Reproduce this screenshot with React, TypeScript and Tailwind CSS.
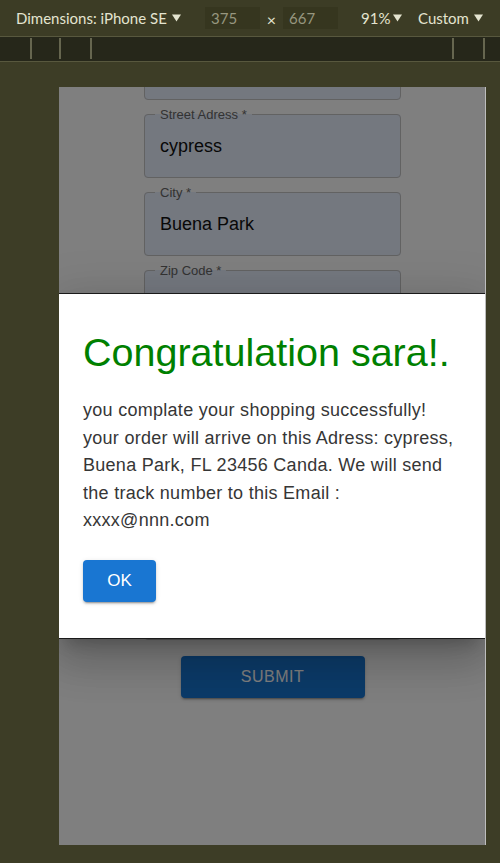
import React from "react";

const Tri = () => (
  <svg width="9" height="8" viewBox="0 0 9 8" className="inline-block">
    <path d="M0 0.5 L9 0.5 L4.5 7.5 Z" fill="#e4e4d0" />
  </svg>
);

const fields = [
  { label: "", value: "", last: false },
  { label: "Street Adress *", value: "cypress", last: false },
  { label: "City *", value: "Buena Park", last: false },
  { label: "Zip Code *", value: "", last: false },
  { label: "", value: "", last: false },
  { label: "", value: "", last: false },
  { label: "", value: "", last: false },
  { label: "", value: "", last: true },
];

export default function App() {
  return (
    <div className="w-[500px] h-[863px] overflow-hidden bg-[#3d3d26] flex flex-col" style={{ fontFamily: "'Liberation Sans', Arial, sans-serif" }}>
      {/* top bar */}
      <div className="h-[37px] shrink-0 flex items-center pl-[16px] border-b border-[#58583e] text-[#e4e4d0] text-[15px] leading-[20px] bg-[#3c3c25]" style={{ fontFamily: "Lato, 'Noto Sans', sans-serif" }}>
        <div className="w-[189px] flex items-center gap-[5px]">
          <span>Dimensions: iPhone SE</span>
          <Tri />
        </div>
        <div className="w-[55px] h-[22px] bg-[#36361f] pl-[6px] flex items-center text-[#97977f]">375</div>
        <div className="w-[23px] flex items-center justify-center text-[#e4e4d0] text-[16px] pt-[3px]">×</div>
        <div className="w-[55px] h-[22px] bg-[#36361f] pl-[6px] flex items-center text-[#97977f]">667</div>
        <div className="ml-[23px] w-[57px] flex items-center gap-[3px]">
          <span>91%</span>
          <Tri />
        </div>
        <div className="flex items-center gap-[5px]">
          <span>Custom</span>
          <Tri />
        </div>
      </div>
      {/* ruler */}
      <div className="h-[25px] shrink-0 bg-[#26271a] border-b border-[#58583e] flex items-start pt-[1px]">
        <div className="ml-[30px] w-[2px] h-[21px] bg-[#66664f]" />
        <div className="ml-[27px] w-[2px] h-[21px] bg-[#66664f]" />
        <div className="ml-[29px] w-[2px] h-[21px] bg-[#66664f]" />
        <div className="ml-[360px] w-[2px] h-[21px] bg-[#66664f]" />
        <div className="ml-[29px] w-[2px] h-[21px] bg-[#66664f]" />
      </div>
      {/* stage */}
      <div className="flex-1 pt-[25px] pl-[59px]">
        <div className="relative w-[427px] h-[758px] bg-white overflow-hidden border-r border-[#bdbdbd]">
          <div className="flex flex-col items-center -mt-[57.5px]">
            <div className="flex flex-col gap-[8px] w-[257px] ml-[1px]">
              {fields.map((f, i) => (
                <fieldset key={i} className={(f.last ? "h-[64.5px] " : "h-[70px] ") + "rounded-[4px] border border-[#c4c4c4] bg-[#e8f0fe] p-0 m-0 min-w-0"}>
                  {f.label ? (
                    <legend className="ml-[10px] px-[5px] text-[13px] leading-[13px] text-[#666666]">{f.label}</legend>
                  ) : null}
                  {f.value ? (
                    <div className="pl-[15px] pt-[16px] text-[18px] leading-[18px] text-[#111111]">{f.value}</div>
                  ) : null}
                </fieldset>
              ))}
            </div>
            <button className="mt-[16px] ml-[1px] w-[184px] h-[42px] rounded-[4px] bg-[#1976d2] text-white text-[16px] tracking-[0.5px] uppercase shadow-[0_3px_1px_-2px_rgba(0,0,0,0.2),0_2px_2px_0_rgba(0,0,0,0.14),0_1px_5px_0_rgba(0,0,0,0.12)]">
              Submit
            </button>
          </div>

          {/* overlay */}
          <div className="absolute inset-0 bg-black/50" />

          {/* dialog */}
          <div className="absolute left-0 right-0 top-[206px] h-[346px] bg-white border-y border-[#1a1a1a] px-[24px] pt-[35px] shadow-[0_11px_15px_-7px_rgba(0,0,0,0.2),0_24px_38px_3px_rgba(0,0,0,0.14),0_9px_46px_8px_rgba(0,0,0,0.12)]">
            <h1 className="text-[39.5px] leading-[47.4px] text-[#008000] font-normal">Congratulation sara!.</h1>
            <p className="mt-[21px] text-[18px] leading-[27.5px] tracking-[0.28px] text-[#363636]">
              you complate your shopping successfully! your order will arrive on this Adress: cypress, Buena Park, FL 23456 Canda. We will send the track number to this Email : xxxx@nnn.com
            </p>
            <button className="mt-[25px] w-[73px] h-[42px] rounded-[4px] bg-[#1976d2] text-white text-[17px] shadow-[0_3px_1px_-2px_rgba(0,0,0,0.2),0_2px_2px_0_rgba(0,0,0,0.14),0_1px_5px_0_rgba(0,0,0,0.12)]">
              OK
            </button>
          </div>
        </div>
      </div>
    </div>
  );
}
